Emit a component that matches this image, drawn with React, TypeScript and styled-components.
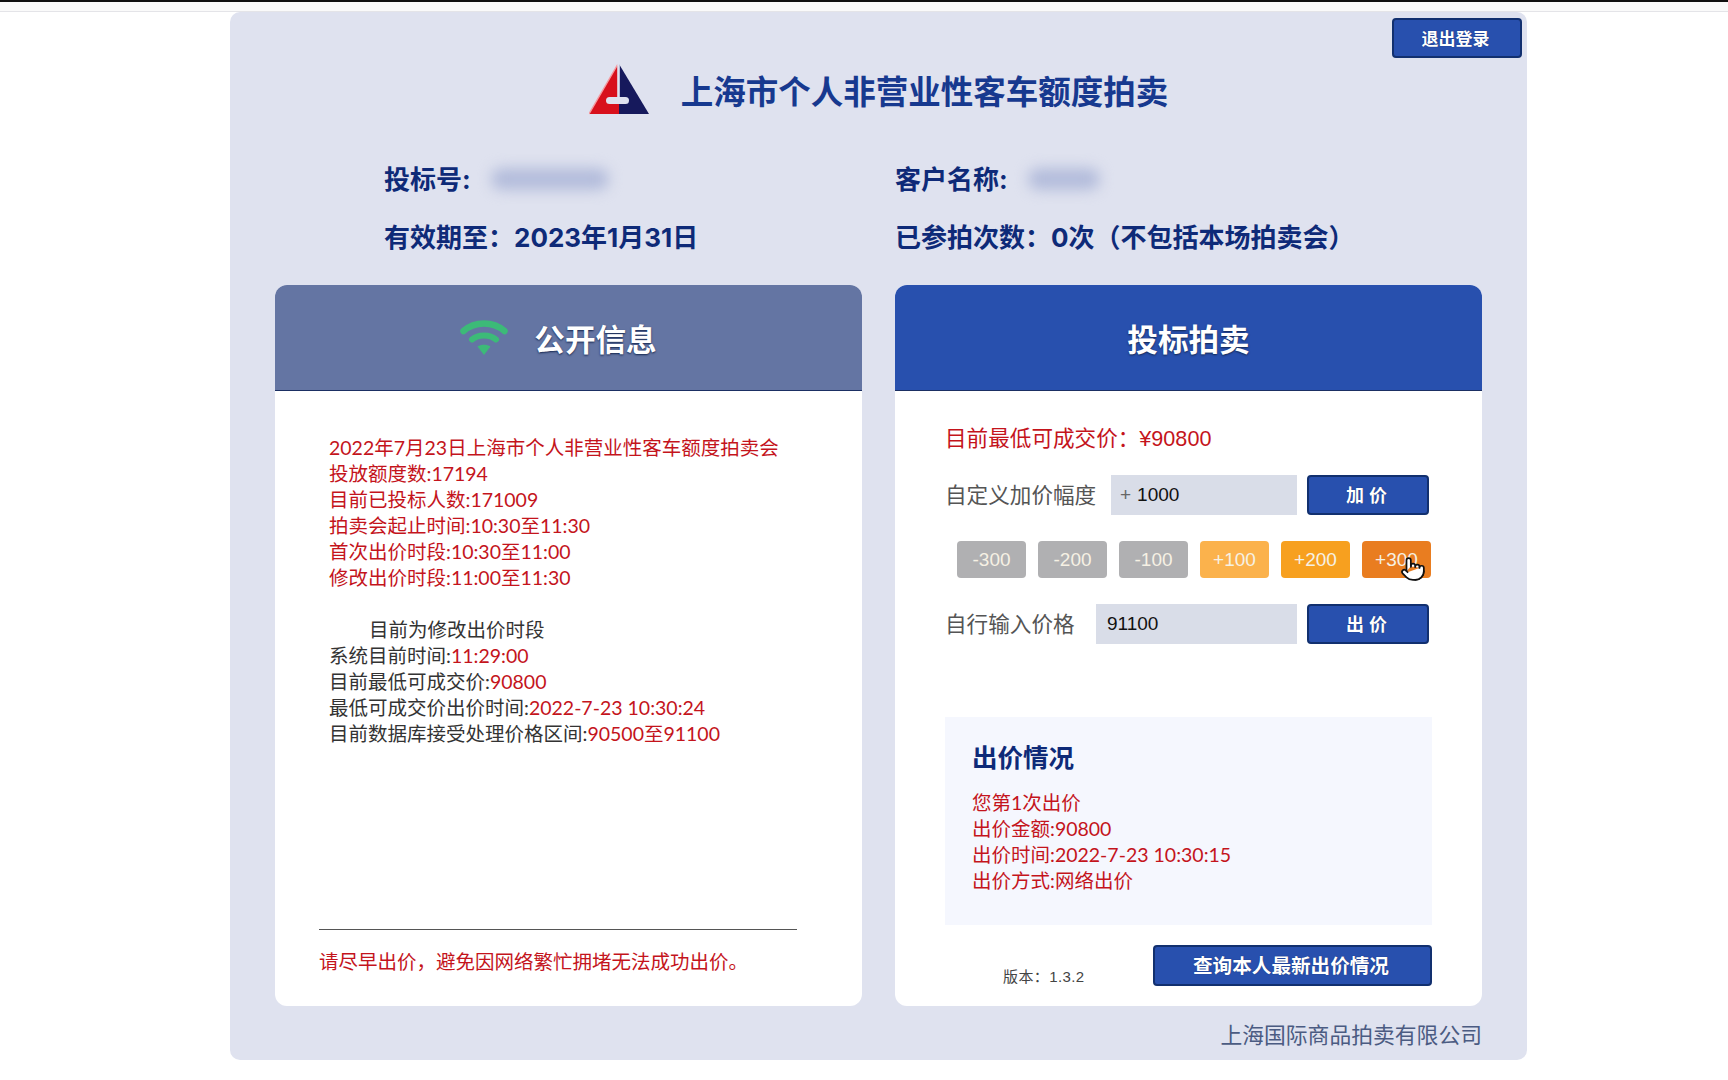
import React from 'react';
import { createGlobalStyle, styled } from 'styled-components';
import { Pointer } from 'lucide-react';

const GlobalStyle = createGlobalStyle`
    html, body {
        margin: 0;
        padding: 0;
        background: #fff;
        font-family: 'Liberation Sans', 'Noto Sans CJK SC', sans-serif;
    }
    * {
        box-sizing: border-box;
    }
`;

const RED = '#c4141c';
const NAVY = '#0e2a78';
const BLUE = '#2850ae';

const BrowserEdge = styled.div`
    height: 12px;
    background: #fafafa;
    border-top: 2px solid #111;
    border-bottom: 1px solid #e4e4e8;
`;

const Panel = styled.main`
    width: 1297px;
    margin-left: 230px;
    padding: 0 45px 9px;
    background: #dfe2ef;
    border-radius: 10px;
`;

const TopBar = styled.div`
    display: flex;
    justify-content: flex-end;
    padding-top: 6px;
    margin-right: -40px;
`;

const SolidButton = styled.button<{ $w: number; $size?: number; $h?: number }>`
    width: ${(p) => p.$w}px;
    height: ${(p) => p.$h ?? 40}px;
    flex: none;
    padding: 0 3px 2px 0;
    background: ${BLUE};
    border: 2px solid #12306f;
    border-radius: 4px;
    color: #fff;
    font-family: inherit;
    font-weight: bold;
    font-size: ${(p) => p.$size ?? 18}px;
    text-shadow: 0 0 1px #0b2260;
`;

const TitleRow = styled.header`
    display: flex;
    justify-content: center;
    align-items: center;
    gap: 32px;
    height: 51px;
    margin-top: 6px;
`;

const Title = styled.h1`
    margin: 0;
    font-size: 32.5px;
    font-weight: bold;
    color: #17398f;
`;

const InfoGrid = styled.section`
    display: grid;
    grid-template-columns: 511px 1fr;
    grid-auto-rows: 58px;
    align-items: center;
    padding-left: 109px;
    margin-top: 35px;
    margin-bottom: 19px;
    color: ${NAVY};
    font-family: 'Inter', 'Noto Sans CJK SC', sans-serif;
    font-size: 26px;
    font-weight: bold;
`;

const InfoItem = styled.div`
    display: flex;
    align-items: center;
    padding-bottom: 4px;
`;

const Blurred = styled.span<{ $w: number }>`
    display: inline-block;
    width: ${(p) => p.$w}px;
    height: 22px;
    margin: 4px 0 0 20px;
    background: #b3bcdb;
    border-radius: 11px;
    filter: blur(7px);
`;

const Cards = styled.div`
    display: grid;
    grid-template-columns: 587px 587px;
    column-gap: 33px;
`;

const Card = styled.section`
    display: flex;
    flex-direction: column;
    height: 721px;
    background: #fff;
    border-radius: 12px;
    overflow: hidden;
`;

const CardHead = styled.div<{ $bg: string; $shift?: number }>`
    display: flex;
    justify-content: center;
    align-items: center;
    gap: 26px;
    height: 106px;
    flex: none;
    padding-right: ${(p) => p.$shift ?? 0}px;
    background: ${(p) => p.$bg};
    border-bottom: 1px solid #1b2f63;
    color: #fff;
    font-size: 30.6px;
    font-weight: bold;
    text-shadow: 0 1px 2px #14264f;
`;

const PublicBody = styled.div`
    display: flex;
    flex-direction: column;
    flex: 1;
    padding: 44px 66px 31px 44px;
`;

const Lines = styled.div<{ $indent?: number }>`
    padding-left: ${(p) => p.$indent ?? 10}px;
    font-family: 'Lato', 'Noto Sans CJK SC', sans-serif;
    font-size: 19.5px;
    line-height: 26px;
    color: #333;
`;

const Line = styled.div<{ $tone?: string; $indent?: boolean }>`
    min-height: 26px;
    color: ${(p) => p.$tone ?? 'inherit'};
    text-indent: ${(p) => (p.$indent ? '40px' : '0')};
`;

const Hot = styled.span`
    color: ${RED};
`;

const Divider = styled.hr`
    width: 478px;
    margin: auto 0 19px;
    border: 0;
    border-top: 1px solid #555;
`;

const Notice = styled.p`
    margin: 0;
    font-size: 19.5px;
    line-height: 26px;
    color: ${RED};
`;

const BidBody = styled.div`
    display: flex;
    flex-direction: column;
    flex: 1;
    padding: 33px 50px 20px;
`;

const LowestPrice = styled.div`
    font-size: 21.6px;
    line-height: 30px;
    color: ${RED};
`;

const FieldRow = styled.div<{ $top: number }>`
    display: flex;
    align-items: center;
    margin-top: ${(p) => p.$top}px;
    padding-right: 3px;
`;

const FieldLabel = styled.label`
    padding-bottom: 3px;
    font-size: 21.6px;
    color: #555;
    white-space: nowrap;
`;

const FieldBox = styled.div<{ $w: number }>`
    display: flex;
    align-items: center;
    gap: 6px;
    width: ${(p) => p.$w}px;
    height: 40px;
    margin-left: auto;
    margin-right: 10px;
    padding-left: 11px;
    background: #d9dde8;
    font-size: 19px;
    color: #111;
`;

const Prefix = styled.span`
    margin-left: -2px;
    color: #666;
`;

const FieldInput = styled.input`
    flex: 1;
    min-width: 0;
    padding: 0;
    border: 0;
    outline: 0;
    background: transparent;
    font: inherit;
    color: inherit;
`;

const StepRow = styled.div`
    display: flex;
    gap: 12px;
    margin-top: 26px;
    padding-left: 12px;
`;

const StepButton = styled.button<{ $bg: string }>`
    position: relative;
    width: 69px;
    height: 37px;
    padding: 0;
    border: 0;
    border-radius: 4px;
    background: ${(p) => p.$bg};
    color: #f6f1e4;
    font-family: inherit;
    font-size: 19px;
`;

const HandCursor = styled.span`
    position: absolute;
    left: 38px;
    top: 15px;
    display: flex;
    color: #111;
`;

const BidSummary = styled.div`
    height: 208px;
    margin-top: 73px;
    padding: 23px 27px;
    background: #f5f7fe;
`;

const SummaryTitle = styled.h2`
    margin: 0 0 14px;
    font-size: 25.5px;
    line-height: 36px;
    font-weight: bold;
    color: ${NAVY};
`;

const BottomRow = styled.div`
    display: flex;
    justify-content: space-between;
    align-items: flex-end;
    margin-top: auto;
`;

const Version = styled.span`
    margin: 0 0 0 58px;
    font-size: 15px;
    letter-spacing: 0.4px;
    color: #444;
`;

const Company = styled.footer`
    padding-top: 15px;
    font-size: 21.8px;
    line-height: 30px;
    text-align: right;
    color: #4b5b82;
`;

const Logo = () => (
    <svg width="60" height="51" viewBox="0 0 60 51" aria-hidden="true">
        <polygon points="29,0 0,50 30,50 30,0" fill="#d8101c" />
        <polygon points="30,0 60,50 30,50" fill="#16195c" />
        <polyline points="29,0 0,50" fill="none" stroke="#f49aa0" strokeWidth="1.4" />
        <rect x="28.2" y="0" width="2.6" height="34" fill="#dfe2ef" />
        <rect x="17" y="33" width="23" height="7" rx="3.5" fill="#dfe2ef" />
    </svg>
);

const WifiIcon = () => (
    <svg width="48" height="36" viewBox="0 0 48 36" fill="none" stroke="#3cba78" strokeLinecap="round" aria-hidden="true">
        <path d="M3.5 11 C15 1 33 1 44.5 11" strokeWidth="6.5" />
        <path d="M12 19.5 C18 14 30 14 36 19.5" strokeWidth="6" />
        <path d="M17.5 26.5 C21 24 27 24 30.5 26.5 L24 35 Z" fill="#3cba78" stroke="none" />
    </svg>
);

const auctionLines = [
    '2022年7月23日上海市个人非营业性客车额度拍卖会',
    '投放额度数:17194',
    '目前已投标人数:171009',
    '拍卖会起止时间:10:30至11:30',
    '首次出价时段:10:30至11:00',
    '修改出价时段:11:00至11:30',
];

const statusLines = [
    { label: '系统目前时间:', value: '11:29:00' },
    { label: '目前最低可成交价:', value: '90800' },
    { label: '最低可成交价出价时间:', value: '2022-7-23 10:30:24' },
    { label: '目前数据库接受处理价格区间:', value: '90500至91100' },
];

const bidLines = ['您第1次出价', '出价金额:90800', '出价时间:2022-7-23 10:30:15', '出价方式:网络出价'];

const steps = [
    { text: '-300', bg: '#b0b0b2' },
    { text: '-200', bg: '#b0b0b2' },
    { text: '-100', bg: '#b0b0b2' },
    { text: '+100', bg: '#fbb24c' },
    { text: '+200', bg: '#f7a01f' },
    { text: '+300', bg: '#e97d20' },
];

const App = () => {
    return (
        <>
            <GlobalStyle />
            <BrowserEdge />
            <Panel>
                <TopBar>
                    <SolidButton $w={130} $h={40} $size={17}>
                        退出登录
                    </SolidButton>
                </TopBar>
                <TitleRow>
                    <Logo />
                    <Title>上海市个人非营业性客车额度拍卖</Title>
                </TitleRow>
                <InfoGrid>
                    <InfoItem>
                        投标号:
                        <Blurred $w={118} />
                    </InfoItem>
                    <InfoItem>
                        客户名称:
                        <Blurred $w={72} />
                    </InfoItem>
                    <InfoItem>{'有效期至\uFF1A2023年1月31日'}</InfoItem>
                    <InfoItem>{'已参拍次数\uFF1A0次\uFF08不包括本场拍卖会\uFF09'}</InfoItem>
                </InfoGrid>
                <Cards>
                    <Card>
                        <CardHead $bg="#6475a3" $shift={20}>
                            <WifiIcon />
                            公开信息
                        </CardHead>
                        <PublicBody>
                            <Lines>
                                {auctionLines.map((text) => (
                                    <Line key={text} $tone={RED}>
                                        {text}
                                    </Line>
                                ))}
                                <Line />
                                <Line $indent>目前为修改出价时段</Line>
                                {statusLines.map((a) => (
                                    <Line key={a.label}>
                                        {a.label}
                                        <Hot>{a.value}</Hot>
                                    </Line>
                                ))}
                            </Lines>
                            <Divider />
                            <Notice>{'请尽早出价\uFF0C避免因网络繁忙拥堵无法成功出价。'}</Notice>
                        </PublicBody>
                    </Card>
                    <Card>
                        <CardHead $bg={BLUE}>投标拍卖</CardHead>
                        <BidBody>
                            <LowestPrice>{'目前最低可成交价\uFF1A¥90800'}</LowestPrice>
                            <FieldRow $top={21}>
                                <FieldLabel>自定义加价幅度</FieldLabel>
                                <FieldBox $w={186}>
                                    <Prefix>+</Prefix>
                                    <FieldInput defaultValue="1000" readOnly />
                                </FieldBox>
                                <SolidButton $w={122}>加 价</SolidButton>
                            </FieldRow>
                            <StepRow>
                                {steps.map((a, i) => (
                                    <StepButton key={a.text} $bg={a.bg}>
                                        {a.text}
                                        {i === steps.length - 1 && (
                                            <HandCursor>
                                                <Pointer size={26} fill="#fff" strokeWidth={1.6} />
                                            </HandCursor>
                                        )}
                                    </StepButton>
                                ))}
                            </StepRow>
                            <FieldRow $top={26}>
                                <FieldLabel>自行输入价格</FieldLabel>
                                <FieldBox $w={201}>
                                    <FieldInput defaultValue="91100" readOnly />
                                </FieldBox>
                                <SolidButton $w={122}>出 价</SolidButton>
                            </FieldRow>
                            <BidSummary>
                                <SummaryTitle>出价情况</SummaryTitle>
                                <Lines $indent={0}>
                                    {bidLines.map((text) => (
                                        <Line key={text} $tone={RED}>
                                            {text}
                                        </Line>
                                    ))}
                                </Lines>
                            </BidSummary>
                            <BottomRow>
                                <Version>{'版本\uFF1A1.3.2'}</Version>
                                <SolidButton $w={279} $h={41} $size={19.6}>
                                    查询本人最新出价情况
                                </SolidButton>
                            </BottomRow>
                        </BidBody>
                    </Card>
                </Cards>
                <Company>上海国际商品拍卖有限公司</Company>
            </Panel>
        </>
    );
};

export default App;
